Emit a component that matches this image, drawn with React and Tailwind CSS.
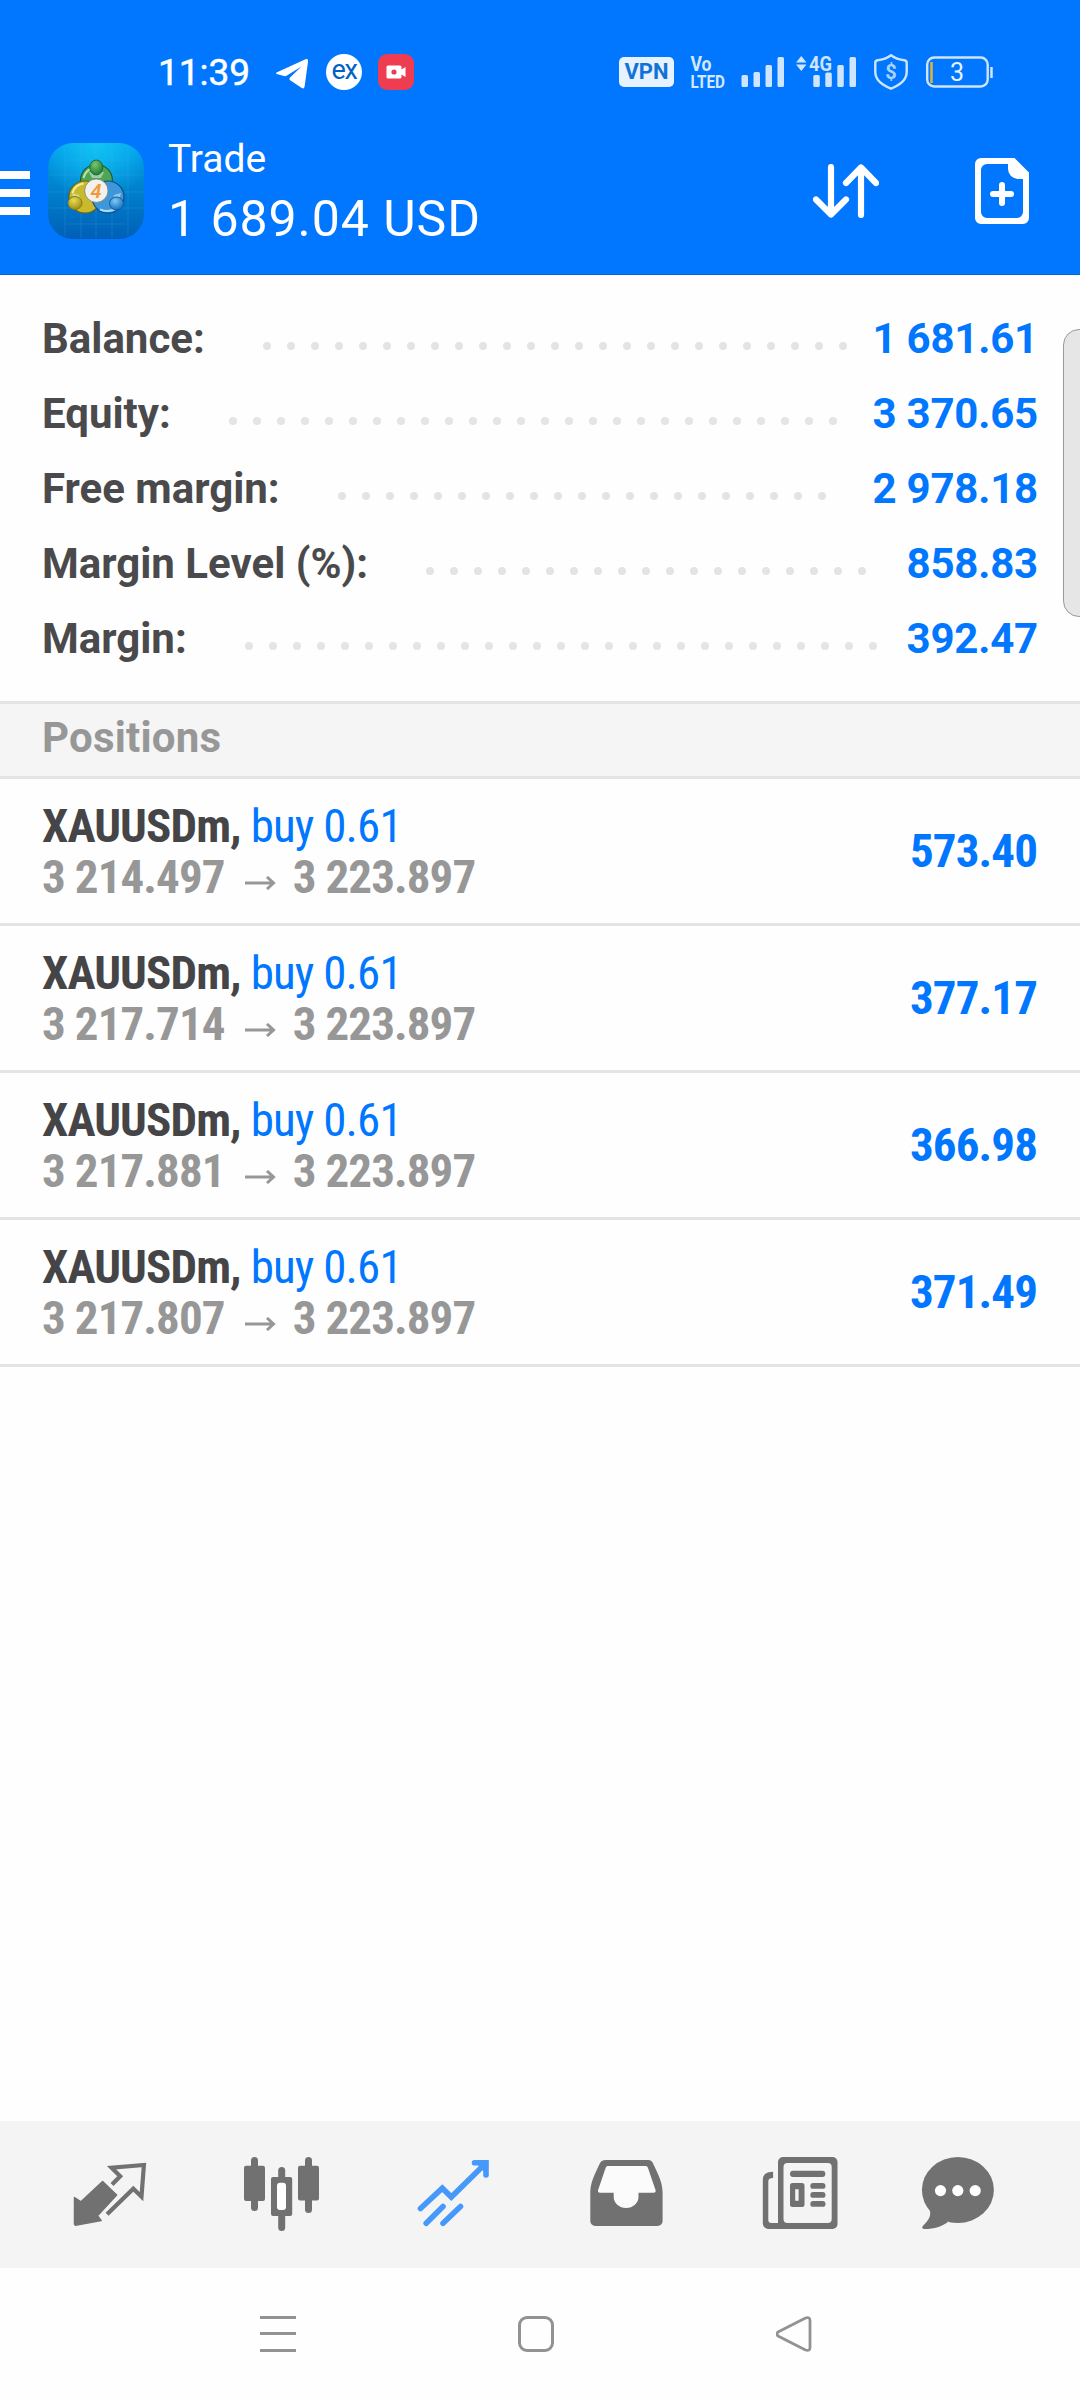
import React from 'react';

const SUMMARY = [
  { label: 'Balance:', value: '1 681.61' },
  { label: 'Equity:', value: '3 370.65' },
  { label: 'Free margin:', value: '2 978.18' },
  { label: 'Margin Level (%):', value: '858.83' },
  { label: 'Margin:', value: '392.47' },
];

const POSITIONS = [
  { id: 1, symbol: 'XAUUSDm', side: 'buy 0.61', open: '3 214.497', current: '3 223.897', profit: '573.40' },
  { id: 2, symbol: 'XAUUSDm', side: 'buy 0.61', open: '3 217.714', current: '3 223.897', profit: '377.17' },
  { id: 3, symbol: 'XAUUSDm', side: 'buy 0.61', open: '3 217.881', current: '3 223.897', profit: '366.98' },
  { id: 4, symbol: 'XAUUSDm', side: 'buy 0.61', open: '3 217.807', current: '3 223.897', profit: '371.49' },
];

const DOTS = Array.from({ length: 30 }, (_, i) => i);

function StatusBar() {
  return (
    <div className="flex h-[143px] items-center pt-px pl-[158px] text-white">
      <span className="w-[95px] text-[37px] leading-none whitespace-nowrap [-webkit-text-stroke:0.5px_white]">11:39</span>
      <svg className="ml-[22px] h-9 w-9" viewBox="0 0 36 36" fill="currentColor">
        <path d="M1.500 18.500 30.500 5.300q3-1 2.600 2L29.600 32.500q-.6 3-3.200 1.300L15.500 26.500q-2-1.600-.2-3.300L26.500 12.500 11.500 21.800q-1.200.7-2.500.3l-7.300-2q-1.300-.7-.2-1.600z" />
      </svg>
      <div className="ml-[15px] flex h-9 w-9 items-center justify-center rounded-full bg-white pb-1 text-[27px] leading-none tracking-tighter text-[#0060c8]">
        ex
      </div>
      <div className="ml-4 flex h-9 w-9 items-center justify-center rounded-[9px] bg-[#ee3c50]">
        <svg className="h-4 w-5" viewBox="0 0 20 16">
          <path d="M2 1.500h12a1.500 1.500 0 0 1 1.500 1.500v2.500L19.500 3v10l-4-2.500V13a1.500 1.500 0 0 1-1.500 1.500H2A1.500 1.500 0 0 1 .5 13V3A1.500 1.500 0 0 1 2 1.500z" fill="#fff" />
          <circle cx="8" cy="8" r="2.600" fill="#ee3c50" />
        </svg>
      </div>

      <div className="ml-[205px] flex h-[30px] w-[55px] items-center justify-center rounded-[5px] bg-[#e6f2ff] text-[22px] leading-none font-bold text-[#1272d8]">
        VPN
      </div>
      <svg className="ml-4 h-10 w-9 overflow-visible" viewBox="0 -3 36 40" fill="#d5e8ff" fontWeight="700">
        <text x="0.500" y="16" fontSize="20" textLength="21" lengthAdjust="spacingAndGlyphs">Vo</text>
        <text x="0.500" y="32.500" fontSize="19" textLength="34.500" lengthAdjust="spacingAndGlyphs">LTED</text>
      </svg>
      <svg className="ml-[15px] h-[30px] w-[43px]" viewBox="0 0 43 30" fill="#cfe5ff">
        <rect x="0.500" y="18" width="6.500" height="12" rx="1.500" />
        <rect x="12.500" y="15" width="6.500" height="15" rx="1.500" />
        <rect x="24.500" y="8" width="6.500" height="22" rx="1.500" />
        <rect x="36.500" y="0" width="6.500" height="30" rx="1.500" />
      </svg>
      <svg className="ml-3 h-10 w-[60px]" viewBox="0 -4 60 40" fill="#cfe5ff">
        <path d="M0 6.500 5.300 0l5.200 6.500zM0 8.500h10.500L5.300 15z" />
        <text x="13" y="15" fontSize="20" fontWeight="700" textLength="23" lengthAdjust="spacingAndGlyphs">4G</text>
        <rect x="17.300" y="19" width="6.500" height="12" rx="1.500" />
        <rect x="29.300" y="16.500" width="6.500" height="14.500" rx="1.500" />
        <rect x="41.300" y="9" width="6.500" height="22" rx="1.500" />
        <rect x="53.500" y="1" width="6.500" height="30" rx="1.500" />
      </svg>
      <svg className="ml-[18px] h-9 w-[34px]" viewBox="0 0 34 36" fill="none" stroke="#cfe5ff" strokeWidth="2.400">
        <path d="M17 1.300c4 3 9 4.500 13.500 5 1.500.2 2.200 1 2.200 2.500V18c0 8-6.500 13-15.700 16.700C7.800 31 1.300 26 1.300 18V8.800c0-1.500.7-2.300 2.200-2.500C8 5.800 13 4.300 17 1.300z" />
        <text x="17" y="25" fontSize="20" fontWeight="700" textAnchor="middle" fill="#a9d2ff" stroke="none">$</text>
      </svg>
      <svg className="ml-[18px] h-8 w-[68px]" viewBox="0 0 68 32" fill="none" stroke="#cfe5ff" strokeWidth="2.400">
        <rect x="1.200" y="1.500" width="60.500" height="29" rx="7" />
        <path d="M65.500 11v11" strokeWidth="2.500" />
        <path d="M5.500 6v21" stroke="#e5b040" strokeWidth="2.500" />
        <text x="31" y="25" fontSize="25" textAnchor="middle" fill="#e6f2ff" stroke="none">3</text>
      </svg>
    </div>
  );
}

function AppLogo() {
  return (
    <svg className="ml-[18px] h-24 w-24" viewBox="0 0 96 96">
      <defs>
        <linearGradient id="logoBg" x1="0" y1="0" x2="0" y2="1">
          <stop offset="0" stopColor="#009fea" />
          <stop offset="0.500" stopColor="#0080cc" />
          <stop offset="1" stopColor="#005fb8" />
        </linearGradient>
        <radialGradient id="logoGlow" cx="0.500" cy="0" r="0.600">
          <stop offset="0" stopColor="#12c4f4" />
          <stop offset="1" stopColor="#12c4f4" stopOpacity="0" />
        </radialGradient>
        <radialGradient id="green" cx="0.400" cy="0.300" r="0.700">
          <stop offset="0" stopColor="#7cc46c" />
          <stop offset="1" stopColor="#1f7d3a" />
        </radialGradient>
        <radialGradient id="yellow" cx="0.400" cy="0.300" r="0.700">
          <stop offset="0" stopColor="#e8dc58" />
          <stop offset="1" stopColor="#a08f14" />
        </radialGradient>
        <radialGradient id="blue" cx="0.400" cy="0.300" r="0.700">
          <stop offset="0" stopColor="#7ccaf6" />
          <stop offset="1" stopColor="#1672bd" />
        </radialGradient>
      </defs>
      <rect width="96" height="96" rx="25" fill="url(#logoBg)" />
      <rect width="96" height="96" rx="25" fill="url(#logoGlow)" />
      <path d="M1 32h94M1 49h94M1 65h94M18 17h60M18 81h60M17 3v90M33 1v94M48 1v94M64 1v94M80 3v90" stroke="#5cc4f4" strokeOpacity="0.180" />
      {/* three seated figures around the badge */}
      <circle cx="48.500" cy="37.500" r="16" fill="#4fa552" stroke="#1c5b36" strokeWidth="1.200" />
      <path d="M35.500 35a13.500 13.500 0 0 1 8-9.500" fill="none" stroke="#bfe3b0" strokeWidth="2" />
      <circle cx="37" cy="54" r="16" fill="#c9b92c" stroke="#6e6410" strokeWidth="1.200" />
      <path d="M24.500 50a13.500 13.500 0 0 1 11-9.500" fill="none" stroke="#f4ee9a" strokeWidth="2" />
      <circle cx="60" cy="54" r="16" fill="#3d97da" stroke="#124c86" strokeWidth="1.200" />
      <path d="M52 66.500q10 4 18-2" fill="none" stroke="#a9dcfb" strokeWidth="2" />
      <path d="m41 29 3 6h9l3-6zM24 50l7 2 2 9-5 5zM73 50l-7 2-2 9 5 5z" fill="#dff0ea" fillOpacity="0.550" />
      <ellipse cx="48.300" cy="24.500" rx="6.500" ry="7.500" fill="url(#green)" stroke="#1c6b36" />
      <ellipse cx="27" cy="60" rx="7" ry="6.500" fill="url(#yellow)" stroke="#8a7c10" />
      <ellipse cx="68.500" cy="60.500" rx="7" ry="6.500" fill="url(#blue)" stroke="#125a9c" />
      <circle cx="48.300" cy="47.700" r="11.700" fill="#f3f1ee" stroke="#77806a" strokeWidth="0.800" />
      <text x="48" y="54.500" fontSize="20" fontWeight="600" fontStyle="italic" textAnchor="middle" fill="#f19a3a">4</text>
    </svg>
  );
}

function Header() {
  return (
    <header className="h-[275px] border-b border-[#0068d8] bg-[#0077fe]">
      <StatusBar />
      <div className="flex h-24 items-center text-white">
        <div className="mt-1 flex w-[30px] flex-col gap-2.5">
          <div className="h-2 bg-white" />
          <div className="h-2 bg-white" />
          <div className="h-2 bg-white" />
        </div>
        <AppLogo />
        <div className="mt-1.5 ml-6 flex w-[620px] flex-col whitespace-nowrap">
          <span className="text-[39px] leading-[50px]">Trade</span>
          <span className="text-[50px] leading-[71px] tracking-[0.950px]">1 689.04 USD</span>
        </div>
        <svg className="ml-[25px] h-[54px] w-[66px]" viewBox="0 0 66 54" fill="none" stroke="currentColor" strokeWidth="6.200" strokeLinecap="round" strokeLinejoin="round">
          <path d="M18 3v47M3 35.500 18 50.500l15-15M48 51V4M33 19 48 3.500 63 19" />
        </svg>
        <svg className="ml-24 h-[66px] w-[54px]" viewBox="0 0 54 66">
          <path
            fillRule="evenodd"
            fill="currentColor"
            d="M6 0h33.500L54 14.500V60a6 6 0 0 1-6 6H6a6 6 0 0 1-6-6V6a6 6 0 0 1 6-6zM12 6a6 6 0 0 0-6 6v42a6 6 0 0 0 6 6h30a6 6 0 0 0 6-6V21h-4c-7 0-11-5-11-11V6z"
          />
          <path d="M27 27v18M18 36h18" stroke="currentColor" strokeWidth="6" strokeLinecap="round" />
        </svg>
      </div>
    </header>
  );
}

function SummaryRow({ label, value }) {
  return (
    <div className="flex h-[75px] items-center text-[42px] font-bold whitespace-nowrap">
      <span className="text-[#4a4a4c]">{label}</span>
      <div className="mt-3.5 mr-[23.500px] ml-[58px] flex h-2 flex-1 flex-wrap gap-4 overflow-hidden">
        {DOTS.map((i) => (
          <div key={i} className="h-2 w-2 rounded-full bg-[#e4e4e6]" />
        ))}
      </div>
      <span className="-tracking-[0.200px] text-[#0077fe]">{value}</span>
    </div>
  );
}

function PositionRow({ position }) {
  return (
    <div className="flex h-[147px] items-center justify-between border-b-[3px] border-[#e3e4e4] px-[42px] text-[47px] leading-[51px] font-bold tracking-[-0.900px] whitespace-nowrap [font-family:'Roboto_Condensed',Roboto,sans-serif] [font-stretch:75%]">
      <div>
        <div className="text-[#454548]">
          {position.symbol}, <span className="font-normal text-[#0077fe]">{position.side}</span>
        </div>
        <div className="flex items-center text-[#979797]">
          {position.open}
          <svg className="mt-3 mr-[17px] ml-5 h-3.5 w-[31px]" viewBox="0 0 31 14" fill="none" stroke="currentColor" strokeWidth="3">
            <path d="M0 7h28M22 1l6.500 6-6.500 6" />
          </svg>
          {position.current}
        </div>
      </div>
      <span className="pr-px pb-0.5 text-[#0077fe]">{position.profit}</span>
    </div>
  );
}

function TabBar() {
  return (
    <nav className="flex h-[147px] bg-[#f4f4f4] pt-[33px] pl-[70px] text-[#717171]">
      {/* quotes */}
      <svg className="h-20 w-20" viewBox="0 0 80 80">
        <path d="M32.600 27.500 46.600 41 27.500 61.700l3.700 4.900L5.400 71.200 4.500 70V43.500l6.400 4.300z" fill="currentColor" stroke="currentColor" strokeWidth="1.500" strokeLinejoin="round" />
        <path d="m42 30.500 8.200-8.200-8.600-8.600L73.900 11l-2.400 31.700-8.200-8-26.200 25.600" fill="none" stroke="currentColor" strokeWidth="4.200" />
      </svg>
      {/* chart */}
      <svg className="ml-[92px] h-20 w-20" viewBox="0 0 80 80" fill="currentColor">
        <rect x="9" y="3" width="7" height="54" rx="3.500" />
        <rect x="2" y="11.700" width="21" height="35.300" rx="2" />
        <rect x="36.200" y="13" width="7" height="64" rx="3.500" />
        <rect x="29" y="23" width="21.200" height="39" rx="2" />
        <rect x="35" y="28.700" width="9" height="27.300" rx="3" fill="#fff" />
        <rect x="63" y="3" width="7" height="56" rx="3.500" />
        <rect x="56" y="11.700" width="21" height="34.800" rx="2" />
      </svg>
      {/* trade, selected */}
      <svg className="ml-[92px] h-20 w-20 text-[#4699fb]" viewBox="0 0 80 80" fill="none" stroke="currentColor" strokeWidth="5.600" strokeLinecap="round">
        <path d="m6.500 54.500 21.800-20.300 9 8.800L72 9M60.500 8.700H72V21M29 52.500 12.200 69.300M46.500 52.500 29 69.300" />
        <path d="M62 9h10v11z" fill="currentColor" stroke="none" />
      </svg>
      {/* history */}
      <svg className="ml-[92px] h-20 w-20" viewBox="0 0 80 80">
        <path
          fill="currentColor"
          d="M20 6h42c3 0 4.300 1.500 5.300 4C73 22 76.600 29 76.600 39v28a5 5 0 0 1-5 5H9.300a5 5 0 0 1-5-5V39C4.300 29 8 22 13.500 10c1.300-2.500 2.800-4 6.500-4z"
        />
        <path d="M22.500 12c-1.500 0-2.200.6-2.900 2l-7.500 22c-.5 1.700 0 2.700 2 2.700h13.600V43c0 6 5.500 11 12.400 11s12.400-5 12.400-11v-4.300h15c2 0 2.500-1 2-2.700l-7.500-22c-.6-1.400-1.400-2-2.900-2z" fill="#fbfbfb" />
      </svg>
      {/* news */}
      <svg className="ml-[92px] h-20 w-20" viewBox="0 0 80 80" fill="currentColor">
        <path d="M15.100 17.700v6.300c-3 0-4.800.8-4.800 4v38c0 2 1 3 3 3H20v6h-8.500c-4.500 0-6.700-2.200-6.700-6.500V26c0-5.500 3.500-8.300 10.300-8.300z" />
        <path fillRule="evenodd" d="M25 3h49.500a5 5 0 0 1 5 5v62a5 5 0 0 1-5 5H15v-6h5V8a5 5 0 0 1 5-5zm4.500 6a4 4 0 0 0-4 4v52a4 4 0 0 0 4 4h40.200a4 4 0 0 0 4-4V13a4 4 0 0 0-4-4z" />
        <rect x="32" y="16.700" width="35.300" height="6.300" rx="3" />
        <path fillRule="evenodd" d="M34.500 29H44a2.500 2.500 0 0 1 2.500 2.500v19A2.500 2.500 0 0 1 44 53h-9.500a2.500 2.500 0 0 1-2.500-2.500v-19a2.500 2.500 0 0 1 2.500-2.500zm2.700 6.300v11.400h3.400V35.300z" />
        <rect x="52.300" y="29" width="15.200" height="5.800" rx="2.900" />
        <rect x="52.300" y="38" width="15.200" height="5.800" rx="2.900" />
        <rect x="52.300" y="47" width="15.200" height="5.800" rx="2.900" />
      </svg>
      {/* messages */}
      <svg className="ml-20 h-20 w-20" viewBox="0 0 80 80">
        <ellipse cx="39.900" cy="36" rx="36" ry="33" fill="currentColor" />
        <path d="M10 53c5 7 1 13-5.200 19-1.300 1.700-.6 3 1.800 3 10 0 17-2.500 23.500-7z" fill="currentColor" />
        <circle cx="22.500" cy="36.600" r="5.600" fill="#fff" />
        <circle cx="39.800" cy="36.600" r="5.600" fill="#fff" />
        <circle cx="57.200" cy="36.600" r="5.600" fill="#fff" />
      </svg>
    </nav>
  );
}

function SystemNav() {
  return (
    <div className="flex h-[132px] items-center pl-[260px] text-[#929292]">
      <svg className="h-9 w-9" viewBox="0 0 36 36" stroke="currentColor" strokeWidth="3">
        <path d="M0 1.500h36M0 17.500h36M0 34.500h36" />
      </svg>
      <div className="ml-[222px] h-9 w-9 rounded-[9px] border-[3px] border-current" />
      <svg className="ml-[222px] h-9 w-9" viewBox="0 0 36 36" fill="none" stroke="currentColor" strokeWidth="2.800" strokeLinejoin="round">
        <path d="M2 16 29.500 2Q34 .5 34 4.500v27q0 4-4.500 2.500L2 20q-2-2 0-4z" />
      </svg>
    </div>
  );
}

function App() {
  return (
    <div className="relative flex h-[2400px] w-[1080px] flex-col overflow-hidden bg-[#fefefe] [font-family:Roboto,sans-serif]">
      <Header />
      <section className="h-[426px] px-[42px] pt-[26px]">
        {SUMMARY.map((row) => (
          <SummaryRow key={row.label} label={row.label} value={row.value} />
        ))}
      </section>
      <div className="flex h-[78px] items-center border-y-[3px] border-[#e3e4e4] bg-[#f5f5f5] pb-1 pl-[42px] text-[42px] leading-none font-bold tracking-[0.200px] text-[#979797]">
        Positions
      </div>
      <section className="flex-1">
        {POSITIONS.map((position) => (
          <PositionRow key={position.id} position={position} />
        ))}
      </section>
      <TabBar />
      <SystemNav />
      {/* scroll thumb over the right edge */}
      <div className="absolute top-[329px] -right-px h-[288px] w-[18px] rounded-l-[16px] border border-[#9a9a9a] bg-[#e6e6e6]" />
    </div>
  );
}

export default App;
